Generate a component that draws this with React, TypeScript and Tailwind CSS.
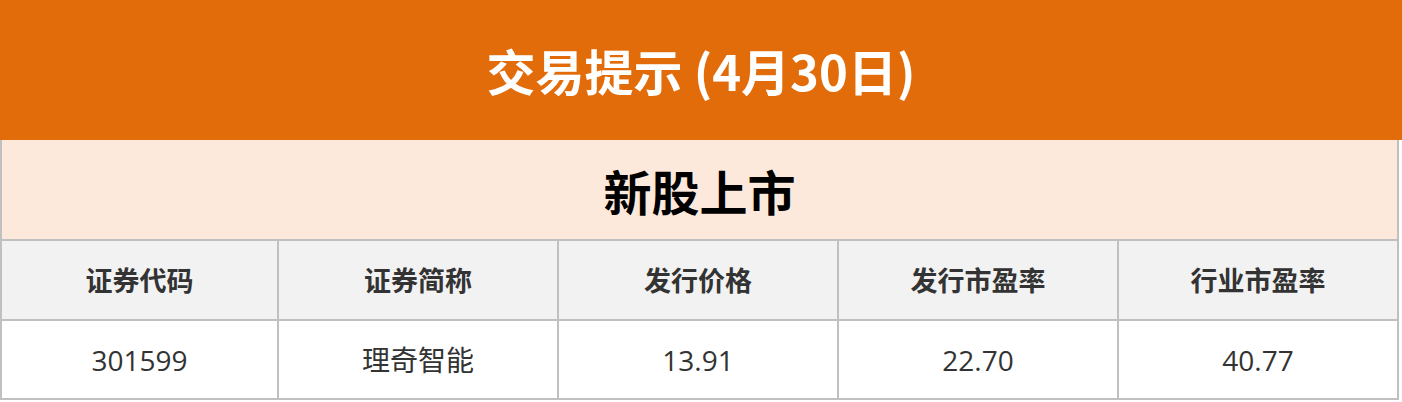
export default function App() {
  const headers = ["证券代码", "证券简称", "发行价格", "发行市盈率", "行业市盈率"];
  const row = ["301599", "理奇智能", "13.91", "22.70", "40.77"];

  return (
    <div className="w-[1402px] h-[402px] bg-white font-['Open_Sans','Noto_Sans_CJK_SC',sans-serif]">
      <div className="h-[140px] bg-[#e36c0a] flex items-center justify-center">
        <h1 className="text-[49px] font-bold text-white leading-none font-['Noto_Sans_CJK_SC',sans-serif] pb-[2px]">
          交易提示 (4月30日)
        </h1>
      </div>

      <div className="w-[1399px] border-x-2 border-b-2 border-[#c0c0c0]">
        <div className="h-[101px] bg-[#fde9dc] flex items-center justify-center border-b-2 border-[#c0c0c0]">
          <h2 className="text-[48px] font-bold text-black leading-none font-['Noto_Sans_CJK_SC',sans-serif]">
            新股上市
          </h2>
        </div>

        <div className="grid grid-cols-[275px_280px_280px_280px_280px] h-[80px] bg-[#f2f2f2] border-b-2 border-[#c0c0c0]">
          {headers.map((h, i) => (
            <div
              key={h}
              className={`flex items-center justify-center text-[27px] font-bold text-[#333333] font-['Noto_Sans_CJK_SC',sans-serif] ${
                i > 0 ? "border-l-2 border-[#c0c0c0]" : ""
              }`}
            >
              {h}
            </div>
          ))}
        </div>

        <div className="grid grid-cols-[275px_280px_280px_280px_280px] h-[77px] bg-white">
          {row.map((v, i) => (
            <div
              key={i}
              className={`flex items-center justify-center text-[28px] text-[#333333] ${
                i > 0 ? "border-l-2 border-[#c0c0c0]" : ""
              }`}
            >
              {v}
            </div>
          ))}
        </div>
      </div>
    </div>
  );
}
